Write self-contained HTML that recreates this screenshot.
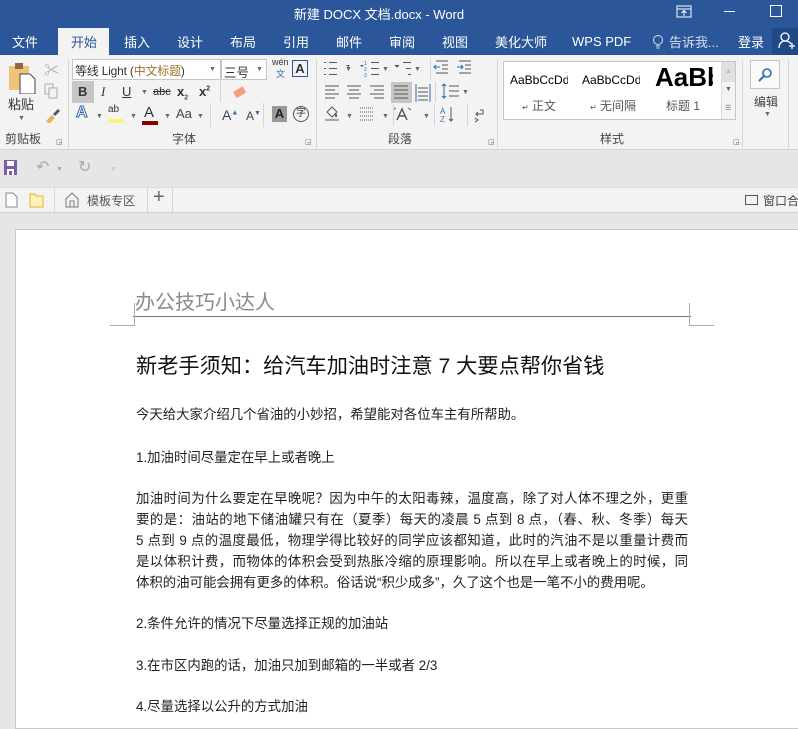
<!DOCTYPE html>
<html><head><meta charset="utf-8"><style>
*{margin:0;padding:0;box-sizing:border-box}
body{width:798px;height:709px;overflow:hidden;background:#e6e6e6;font-family:"Liberation Sans","Noto Sans CJK SC",sans-serif;position:relative;color:#444}
.a{position:absolute;white-space:nowrap}
#title{left:0;top:0;width:798px;height:55px;background:#2b579a}
.tab{color:#fff;font-size:13px;top:32px}
#rib{left:0;top:55px;width:798px;height:95px;background:#f3f3f3;border-bottom:1px solid #d5d5d5}
.sep{width:1px;background:#d5d5d5;top:60px;height:88px}
.lbl{font-size:12px;color:#444;top:130px}
.s12{font-size:12px}
.doc p{position:absolute;left:136px;width:552px;font-size:13.4px;color:#222;white-space:nowrap}
.j{text-align:justify;text-align-last:justify}
.dd{font-size:7px;color:#666}
</style></head><body>
<div id="title" class="a"></div>
<div class="a" style="left:0;top:4px;width:798px;text-align:center;color:#fff;font-size:13px;padding-right:40px">新建 DOCX 文档.docx - Word</div>
<svg class="a" style="left:676px;top:5px" width="16" height="13"><rect x="1" y="1" width="14" height="11" fill="none" stroke="#fff"/><line x1="1" y1="4" x2="15" y2="4" stroke="#fff"/><path d="M8 11V6M5.5 8L8 5.5 10.5 8" stroke="#fff" fill="none"/></svg>
<div class="a" style="left:724px;top:11px;width:11px;height:1px;background:#fff"></div>
<div class="a" style="left:770px;top:5px;width:12px;height:12px;border:1px solid #fff"></div>
<div class="a" style="left:58px;top:28px;width:51px;height:28px;background:#f3f3f3"></div>
<div class="a tab" style="left:12px">文件</div>
<div class="a tab" style="left:71px;color:#2b579a">开始</div>
<div class="a tab" style="left:124px">插入</div>
<div class="a tab" style="left:177px">设计</div>
<div class="a tab" style="left:230px">布局</div>
<div class="a tab" style="left:283px">引用</div>
<div class="a tab" style="left:336px">邮件</div>
<div class="a tab" style="left:389px">审阅</div>
<div class="a tab" style="left:442px">视图</div>
<div class="a tab" style="left:495px">美化大师</div>
<div class="a tab" style="left:572px;top:34px">WPS PDF</div>
<svg class="a" style="left:652px;top:34px" width="12" height="16"><circle cx="6" cy="6" r="4.5" fill="none" stroke="#dde"/><path d="M4 12h4M4.5 14h3" stroke="#dde"/></svg>
<div class="a tab" style="left:669px;color:#dde">告诉我...</div>
<div class="a tab" style="left:738px">登录</div>
<div class="a" style="left:772px;top:28px;width:26px;height:27px;background:#1f4a86"></div>
<svg class="a" style="left:777px;top:31px" width="20" height="20"><circle cx="8" cy="6" r="4" fill="none" stroke="#fff" stroke-width="1.3"/><path d="M2 17c0-5 3-7 6-7s5 1 6 3" fill="none" stroke="#fff" stroke-width="1.3"/><path d="M15 12v6M12 15h6" stroke="#fff" stroke-width="1.3"/></svg>

<div id="rib" class="a"></div>
<svg class="a" style="left:8px;top:62px" width="30" height="32"><rect x="1" y="4" width="20" height="24" fill="#f0c27b"/><rect x="7" y="1" width="8" height="6" fill="#8a6a3a"/><path d="M12 12h10l5 5v15H12z" fill="#fff" stroke="#444"/></svg>
<div class="a s12" style="left:8px;top:94px;font-size:13px;color:#333">粘贴</div>
<div class="a dd" style="left:18px;top:115px">▼</div>
<div class="a" style="left:44px;top:59px;font-size:15px;color:#aaa">✂</div>
<svg class="a" style="left:44px;top:83px" width="14" height="16"><rect x="1" y="1" width="8" height="10" fill="none" stroke="#aaa"/><rect x="5" y="5" width="8" height="10" fill="#f3f3f3" stroke="#aaa"/></svg>
<svg class="a" style="left:44px;top:107px" width="16" height="16"><path d="M2 14l6-6 3 3-6 6z" fill="#e8b060"/><path d="M9 7l5-5 2 2-5 5z" fill="#555"/></svg>
<div class="a lbl" style="left:5px">剪贴板</div>
<div class="a dd" style="left:56px;top:138px">◲</div>
<div class="a sep" style="left:68px"></div>
<div class="a" style="left:72px;top:59px;width:149px;height:21px;background:#fff;border:1px solid #c6c6c6"></div>
<div class="a" style="left:75px;top:62px;font-size:12px;color:#333;letter-spacing:-0.2px">等线 Light (<span style="color:#a26f2a">中文标题</span>)</div>
<div class="a dd" style="left:209px;top:66px">▼</div>
<div class="a" style="left:221px;top:59px;width:46px;height:21px;background:#fff;border:1px solid #c6c6c6"></div>
<div class="a" style="left:224px;top:62px;font-size:12.5px;color:#333">三号</div>
<div class="a dd" style="left:256px;top:66px">▼</div>
<div class="a" style="left:272px;top:57px;font-size:9px;color:#333">wén</div>
<div class="a" style="left:276px;top:67px;font-size:9px;color:#2b6cb0">文</div>
<div class="a" style="left:292px;top:60px;width:16px;height:17px;border:1px solid #2b579a;font-size:13px;text-align:center;line-height:15px;color:#333;font-weight:bold">A</div>
<div class="a" style="left:72px;top:81px;width:22px;height:22px;background:#c6c6c6"></div>
<div class="a" style="left:78px;top:84px;font-size:13px;font-weight:bold;color:#333">B</div>
<div class="a" style="left:101px;top:84px;font-size:13px;font-style:italic;font-family:'Liberation Serif';color:#333">I</div>
<div class="a" style="left:122px;top:84px;font-size:13px;text-decoration:underline;color:#333">U</div>
<div class="a dd" style="left:141px;top:89px">▼</div>
<div class="a" style="left:153px;top:86px;font-size:11px;text-decoration:line-through;color:#333">abc</div>
<div class="a" style="left:177px;top:84px;font-size:13px;font-weight:bold;color:#333">x<sub style="font-size:7px;color:#2b579a">2</sub></div>
<div class="a" style="left:199px;top:84px;font-size:13px;font-weight:bold;color:#333">x<sup style="font-size:7px">2</sup></div>
<div class="a" style="left:220px;top:78px;width:1px;height:24px;background:#d5d5d5"></div>
<svg class="a" style="left:230px;top:83px" width="16" height="18"><rect x="4" y="6" width="11" height="7" transform="rotate(-30 9 9)" fill="#f0a080"/></svg>
<div class="a" style="left:76px;top:104px;font-size:16px;color:#fff;-webkit-text-stroke:1px #2b6cb0;font-weight:bold">A</div>
<div class="a dd" style="left:96px;top:113px">▼</div>
<div class="a" style="left:108px;top:104px;font-size:10px;color:#333">ab</div>
<div class="a" style="left:108px;top:119px;width:16px;height:4px;background:#fff176"></div>
<div class="a dd" style="left:130px;top:113px">▼</div>
<div class="a" style="left:144px;top:104px;font-size:15px;color:#333">A</div>
<div class="a" style="left:142px;top:121px;width:16px;height:4px;background:#8b0000"></div>
<div class="a dd" style="left:164px;top:113px">▼</div>
<div class="a" style="left:176px;top:106px;font-size:13px;color:#444">Aa</div>
<div class="a dd" style="left:197px;top:113px">▼</div>
<div class="a" style="left:210px;top:103px;width:1px;height:24px;background:#d5d5d5"></div>
<div class="a" style="left:222px;top:107px;font-size:14px;color:#444">A<sup style="font-size:7px;color:#2b6cb0">▲</sup></div>
<div class="a" style="left:246px;top:109px;font-size:12px;color:#444">A<sup style="font-size:7px;color:#2b6cb0">▼</sup></div>
<div class="a" style="left:263px;top:103px;width:1px;height:24px;background:#d5d5d5"></div>
<div class="a" style="left:272px;top:106px;width:15px;height:16px;background:#999;color:#222;font-size:13px;font-weight:bold;text-align:center;line-height:16px">A</div>
<div class="a" style="left:293px;top:106px;width:16px;height:16px;border:1px solid #555;border-radius:50%;font-size:10px;text-align:center;line-height:14px;color:#333">字</div>
<div class="a lbl" style="left:172px">字体</div>
<div class="a dd" style="left:305px;top:138px">◲</div>
<div class="a sep" style="left:316px"></div>
<svg class="a" style="left:320px;top:58px" width="180" height="70" stroke="#555" fill="none">
<g stroke="#2b6cb0" stroke-width="2"><path d="M5 4v1M5 10v1M5 16v1"/></g><path d="M9 4.5h8M9 10.5h8M9 16.5h8"/>
<path d="M26 7l2 2 2-2M40 7l2 2 2-2M75 7l2 2 2-2" fill="#555" stroke="none"/>
<path d="M51 4.5h8M51 10.5h8M51 16.5h8"/><text x="44" y="7" font-size="5" fill="#2b6cb0" stroke="none">1</text><text x="44" y="13" font-size="5" fill="#2b6cb0" stroke="none">2</text><text x="44" y="19" font-size="5" fill="#2b6cb0" stroke="none">3</text>
<path d="M83 4.5h8M86 10.5h5M88 16.5h3"/><path d="M75 7l2 2 2-2" fill="#555"/>
<path d="M116 3h12M122 7h6M122 11h6M116 15h12"/><path d="M114 9h6M116 7l-2 2 2 2" stroke="#2b6cb0"/>
<path d="M139 3h12M145 7h6M145 11h6M139 15h12"/><path d="M137 9h6M141 7l2 2-2 2" stroke="#2b6cb0"/>
<path d="M5 28h14M5 32h10M5 36h14M5 40h10"/>
<path d="M27 28h14M29 32h10M27 36h14M29 40h10"/>
<path d="M50 28h14M54 32h10M50 36h14M54 40h10"/>
<rect x="71" y="24" width="21" height="21" fill="#c6c6c6" stroke="none"/><path d="M74 28h14M74 32h14M74 36h14M74 40h14"/>
<path d="M96 26v18M110 26v18" stroke="#2b6cb0"/><path d="M98 30h10M98 34h10M98 38h10M98 42h10"/>
<path d="M129 28h10M129 33h10M129 38h10" /><path d="M124 26v14M122 28l2-2 2 2M122 38l2 2 2-2" stroke="#2b6cb0"/>
<path d="M5 62h14"/><path d="M7 54l5-5 5 5-5 5z"/><path d="M16 56v3" stroke="#2b6cb0" stroke-width="2"/>
<path d="M40 50h14M40 54h14M40 58h14M40 62h14" stroke-dasharray="1 1"/>
<path d="M77 62l5-11 5 11M79 58h6" stroke-width="1.5"/><path d="M73 52l3-2M91 52l-3-2" stroke="#2b6cb0"/>
<text x="120" y="56" font-size="8" fill="#2b6cb0" stroke="none">A</text><text x="120" y="64" font-size="8" fill="#7b5ea7" stroke="none">Z</text><path d="M131 49v14M129 61l2 2 2-2"/>
<path d="M160 52h3v4h-7M158 54l-2 2 2 2M155 60l3 2-3 2"/>
</svg>
<div class="a dd" style="left:345px;top:66px">▼</div>
<div class="a dd" style="left:382px;top:66px">▼</div>
<div class="a dd" style="left:414px;top:66px">▼</div>
<div class="a" style="left:430px;top:59px;width:1px;height:20px;background:#d5d5d5"></div>
<div class="a" style="left:435px;top:82px;width:1px;height:20px;background:#d5d5d5"></div>
<div class="a dd" style="left:462px;top:89px">▼</div>
<div class="a dd" style="left:346px;top:113px">▼</div>
<div class="a dd" style="left:382px;top:113px">▼</div>
<div class="a dd" style="left:423px;top:113px">▼</div>
<div class="a" style="left:393px;top:104px;width:1px;height:22px;background:#d5d5d5"></div>
<div class="a" style="left:434px;top:104px;width:1px;height:22px;background:#d5d5d5"></div>
<div class="a" style="left:467px;top:104px;width:1px;height:22px;background:#d5d5d5"></div>
<div class="a lbl" style="left:388px">段落</div>
<div class="a dd" style="left:488px;top:138px">◲</div>
<div class="a sep" style="left:497px"></div>
<div class="a" style="left:503px;top:61px;width:233px;height:59px;background:#fff;border:1px solid #c6c6c6"></div>
<div class="a" style="left:510px;top:73px;font-size:12px;color:#000;width:58px;overflow:hidden">AaBbCcDd</div>
<div class="a" style="left:522px;top:97px;font-size:12px;color:#555"><span style="font-size:8px">↵</span> 正文</div>
<div class="a" style="left:582px;top:73px;font-size:12px;color:#000;width:58px;overflow:hidden">AaBbCcDd</div>
<div class="a" style="left:590px;top:97px;font-size:12px;color:#555"><span style="font-size:8px">↵</span> 无间隔</div>
<div class="a" style="left:655px;top:62px;font-size:26px;font-weight:bold;color:#000;width:58px;overflow:hidden">AaBb</div>
<div class="a" style="left:666px;top:97px;font-size:12px;color:#555">标题 1</div>
<div class="a" style="left:721px;top:62px;width:14px;height:57px;border-left:1px solid #ddd;background:#f3f3f3"></div>
<div class="a" style="left:721px;top:62px;width:14px;height:20px;background:#e0e0e0"></div>
<div class="a dd" style="left:725px;top:68px;color:#bbb">▲</div>
<div class="a dd" style="left:725px;top:86px">▼</div>
<div class="a dd" style="left:725px;top:104px">☰</div>
<div class="a lbl" style="left:600px">样式</div>
<div class="a dd" style="left:733px;top:138px">◲</div>
<div class="a sep" style="left:742px"></div>
<div class="a" style="left:750px;top:60px;width:30px;height:29px;background:#fafafa;border:1px solid #c6c6c6"></div>
<svg class="a" style="left:756px;top:66px" width="18" height="18"><circle cx="11" cy="7" r="4" fill="none" stroke="#2b6cb0" stroke-width="1.6"/><path d="M8 10l-5 5" stroke="#2b6cb0" stroke-width="2"/></svg>
<div class="a" style="left:754px;top:93px;font-size:12px;color:#444">编辑</div>
<div class="a dd" style="left:764px;top:111px">▼</div>
<div class="a sep" style="left:788px"></div>
<svg class="a" style="left:4px;top:160px" width="14" height="15"><rect x="0" y="0" width="13" height="15" fill="#7a5fa6"/><rect x="3" y="1" width="7" height="5" fill="#fff"/><rect x="3" y="9" width="7" height="6" fill="#fff"/><rect x="5" y="11" width="3" height="4" fill="#7a5fa6"/></svg>
<div class="a" style="left:36px;top:157px;font-size:16px;color:#aaa">↶</div>
<div class="a dd" style="left:56px;top:166px;color:#aaa">▼</div>
<div class="a" style="left:78px;top:157px;font-size:16px;color:#aaa">↻</div>
<div class="a dd" style="left:110px;top:166px;color:#ccc">▼</div>
<div class="a" style="left:0;top:187px;width:798px;height:26px;background:#f3f3f3;border-top:1px solid #ddd;border-bottom:1px solid #d0d0d0"></div>
<svg class="a" style="left:5px;top:192px" width="40" height="16"><path d="M1 1h7l4 4v10H1z" fill="#fff" stroke="#888"/><path d="M25 2h5l1 2h7v11H25z" fill="#fff3b0" stroke="#e0b040"/></svg>
<div class="a" style="left:54px;top:188px;width:1px;height:24px;background:#d5d5d5"></div>
<svg class="a" style="left:65px;top:192px" width="14" height="16"><path d="M1 7l6-6 6 6v8H1z" fill="none" stroke="#777"/><rect x="5" y="9" width="4" height="6" fill="none" stroke="#777"/></svg>
<div class="a" style="left:87px;top:192px;font-size:12px;color:#555">模板专区</div>
<div class="a" style="left:147px;top:188px;width:1px;height:24px;background:#d5d5d5"></div>
<div class="a" style="left:153px;top:186px;font-size:20px;color:#666">+</div>
<div class="a" style="left:172px;top:188px;width:1px;height:24px;background:#d5d5d5"></div>
<div class="a" style="left:745px;top:195px;width:13px;height:10px;border:1px solid #555"></div>
<div class="a" style="left:763px;top:192px;font-size:12px;color:#444">窗口合</div>
<div class="a" style="left:15px;top:229px;width:800px;height:500px;background:#fff;border:1px solid #c8c8c8"></div>
<div class="a" style="left:135px;top:286px;font-size:20px;color:#8a8a8a">办公技巧小达人</div>
<div class="a" style="left:133px;top:316px;width:558px;height:1px;background:#777"></div>
<div class="a" style="left:134px;top:303px;width:1px;height:22px;background:#aaa"></div>
<div class="a" style="left:110px;top:325px;width:25px;height:1px;background:#aaa"></div>
<div class="a" style="left:689px;top:303px;width:1px;height:22px;background:#aaa"></div>
<div class="a" style="left:689px;top:325px;width:25px;height:1px;background:#aaa"></div>
<div class="doc">
<p style="top:349px;font-size:21.2px;color:#111">新老手须知：给汽车加油时注意 7 大要点帮你省钱</p>
<p style="top:403px">今天给大家介绍几个省油的小妙招，希望能对各位车主有所帮助。</p>
<p style="top:446px">1.加油时间尽量定在早上或者晚上</p>
<p class="j" style="top:487px">加油时间为什么要定在早晚呢？因为中午的太阳毒辣，温度高，除了对人体不理之外，更重</p>
<p class="j" style="top:508px">要的是：油站的地下储油罐只有在（夏季）每天的凌晨 5 点到 8 点，（春、秋、冬季）每天</p>
<p class="j" style="top:529px">5 点到 9 点的温度最低，物理学得比较好的同学应该都知道，此时的汽油不是以重量计费而</p>
<p class="j" style="top:550px">是以体积计费，而物体的体积会受到热胀冷缩的原理影响。所以在早上或者晚上的时候，同</p>
<p style="top:571px">体积的油可能会拥有更多的体积。俗话说“积少成多”，久了这个也是一笔不小的费用呢。</p>
<p style="top:612px">2.条件允许的情况下尽量选择正规的加油站</p>
<p style="top:654px">3.在市区内跑的话，加油只加到邮箱的一半或者 2/3</p>
<p style="top:695px">4.尽量选择以公升的方式加油</p>
</div>
</body></html>
